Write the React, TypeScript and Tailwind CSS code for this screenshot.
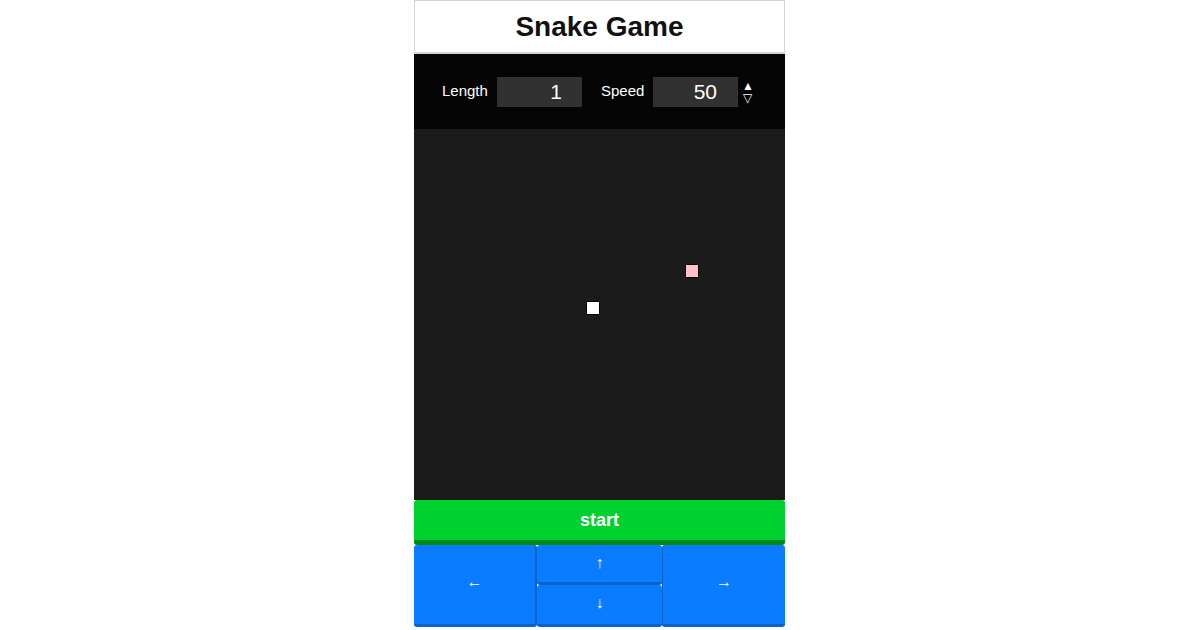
export default function App() {
  return (
    <main className="w-[1200px] h-[630px] bg-white flex justify-center" style={{ fontFamily: '"Liberation Sans", Arial, sans-serif' }}>
      <div className="w-[371px] mr-px flex flex-col">
        {/* header */}
        <header className="h-[54px] border border-b-2 border-[#d6d6d6] bg-white flex items-center justify-center">
          <h1 className="text-[28px] font-bold text-[#111] leading-none">Snake Game</h1>
        </header>

        {/* controls */}
        <div className="h-[75px] bg-[#050505] flex items-center pl-[28px] text-white">
          <span className="text-[15px] w-[55px]">Length</span>
          <div className="w-[85px] h-[30px] bg-[#313131] flex items-center justify-end pr-[20px] text-[21px]">1</div>
          <span className="text-[15px] ml-[19px] w-[52px]">Speed</span>
          <div className="w-[85px] h-[30px] bg-[#313131] flex items-center justify-end pr-[21px] text-[21px]">50</div>
          <div className="flex flex-col items-center ml-[4px] text-[12px] leading-[12px]">
            <span>▲</span>
            <span>▽</span>
          </div>
        </div>

        {/* board */}
        <div className="relative h-[371px] bg-[#1b1b1b]">
          <div className="absolute left-[172px] top-[172px] w-[14px] h-[14px] bg-white border border-[#050505]" />
          <div className="absolute left-[271px] top-[135px] w-[14px] h-[14px] bg-[#ffc0cb] border border-[#050505]" />
        </div>

        {/* start */}
        <button className="h-[45px] bg-[#00d12f] border-b-[5px] border-[#008a1c] rounded-[3px] text-white font-bold text-[18px]">
          start
        </button>

        {/* arrows */}
        <div className="flex h-[82px]">
          <button className="w-[123px] pb-[5px] bg-[#0a7cff] border-b-[3px] border-r-2 border-[#0a63c9] rounded-[3px] text-white text-[16px] font-bold">←</button>
          <div className="w-[125px] flex flex-col">
            <button className="h-[40px] pb-[2px] bg-[#0a7cff] border-b-[3px] border-[#0a63c9] rounded-[3px] text-white text-[16px] font-bold">↑</button>
            <button className="flex-1 pb-[3px] bg-[#0a7cff] border-b-[3px] border-[#0a63c9] rounded-[3px] text-white text-[16px] font-bold">↓</button>
          </div>
          <button className="flex-1 pb-[5px] bg-[#0a7cff] border-b-[3px] border-l border-[#0a63c9] rounded-[3px] text-white text-[16px] font-bold">→</button>
        </div>
      </div>
    </main>
  );
}
